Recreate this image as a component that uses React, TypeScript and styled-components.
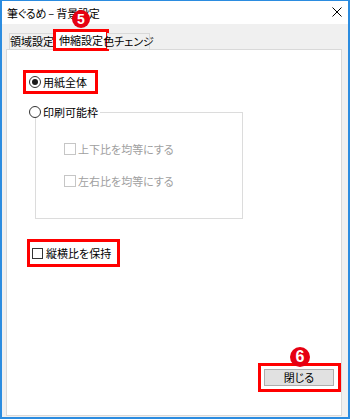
import React from 'react';
import styled, { createGlobalStyle } from 'styled-components';

const Global = createGlobalStyle`
  html, body { margin: 0; padding: 0; background: #ffffff; }
  #root { width: 350px; height: 419px; }
`;

const UI_FONT = `"Noto Sans CJK JP", "Noto Sans", sans-serif`;

const Window = styled.div`
  position: relative;
  width: 350px;
  height: 419px;
  box-sizing: border-box;
  border: 2px solid #2b8ce0;
  border-top-width: 1px;
  display: flex;
  flex-direction: column;
  background: #f0f0f0;
  font-family: ${UI_FONT};
  font-feature-settings: "palt";
  font-size: 11px;
  line-height: 1;
  color: #000;
`;

const TitleBar = styled.div`
  height: 23px;
  flex: none;
  background: #ffffff;
  display: flex;
  align-items: center;
  justify-content: space-between;
  padding: 2px 6px 0 5px;
  box-sizing: border-box;
`;

const TitleText = styled.span`
  font-size: 11px;
  letter-spacing: -0.2px;
  white-space: nowrap;
`;

const CloseIcon = styled.svg`
  width: 10px;
  height: 10px;
  margin-top: -3px;
`;

const Body = styled.div`
  flex: 1;
  display: flex;
  flex-direction: column;
  padding: 7px 6px 1px 4px;
  min-height: 0;
`;

const TabRow = styled.div`
  position: relative;
  z-index: 1;
  height: 19px;
  display: flex;
  align-items: flex-end;
  padding-left: 3px;
  margin-bottom: -1px;
  flex: none;
`;

const Tab = styled.div<{ $active?: boolean; $w: number }>`
  position: relative;
  box-sizing: border-box;
  width: ${(p) => p.$w}px;
  height: ${(p) => (p.$active ? 19 : 16)}px;
  margin-bottom: ${(p) => (p.$active ? 0 : 1)}px;
  border: 1px solid #d9d9d9;
  border-bottom: none;
  background: ${(p) => (p.$active ? '#ffffff' : '#f0f0f0')};
  display: flex;
  align-items: ${(p) => (p.$active ? 'flex-start' : 'center')};
  padding-top: ${(p) => (p.$active ? 3 : 0)}px;
  justify-content: center;
  font-size: 11px;
  white-space: nowrap;
  flex: none;
`;

const TabHighlight = styled.span`
  position: absolute;
  left: -3px;
  right: -3px;
  top: -3px;
  bottom: -1px;
  border: 3px solid #ff0000;
  pointer-events: none;
`;

const Badge = styled.span<{ $size: number; $left: number; $top: number }>`
  position: absolute;
  z-index: 5;
  left: ${(p) => p.$left}px;
  top: ${(p) => p.$top}px;
  width: ${(p) => p.$size}px;
  height: ${(p) => p.$size}px;
  border-radius: 50%;
  background: #e60012;
  color: #ffffff;
  font-family: "Liberation Sans", Arial, sans-serif;
  font-weight: bold;
  font-size: ${(p) => Math.round(p.$size * 0.78)}px;
  display: flex;
  align-items: center;
  justify-content: center;
  line-height: 1;
`;

const Panel = styled.div`
  flex: 1;
  background: #ffffff;
  border: 1px solid #d9d9d9;
  display: flex;
  flex-direction: column;
  align-items: flex-start;
  padding: 20px 0 23px 0;
  min-height: 0;
`;

const Highlight = styled.div<{ $ml: number; $mt: number; $pad: string; $h?: number }>`
  box-sizing: border-box;
  border: 3px solid #ff0000;
  margin-left: ${(p) => p.$ml}px;
  margin-top: ${(p) => p.$mt}px;
  padding: ${(p) => p.$pad};
  display: flex;
  align-items: center;
  ${(p) => (p.$h ? `height: ${p.$h}px;` : '')}
`;

const ButtonBox = styled(Highlight)`
  position: relative;
  align-self: flex-end;
  margin-top: auto;
`;

const Radio = styled.span<{ $checked?: boolean }>`
  box-sizing: border-box;
  width: 12px;
  height: 12px;
  border-radius: 50%;
  border: 1px solid #333333;
  background: #ffffff;
  display: inline-flex;
  align-items: center;
  justify-content: center;
  flex: none;
  &::after {
    content: '';
    width: 6px;
    height: 6px;
    border-radius: 50%;
    background: ${(p) => (p.$checked ? '#1a1a1a' : 'transparent')};
  }
`;

const Check = styled.span<{ $disabled?: boolean; $size: number }>`
  box-sizing: border-box;
  width: ${(p) => p.$size}px;
  height: ${(p) => p.$size}px;
  border: 1px solid ${(p) => (p.$disabled ? '#c6c6c6' : '#333333')};
  background: #ffffff;
  flex: none;
`;

const Label = styled.span<{ $disabled?: boolean; $gap: number }>`
  margin-left: ${(p) => p.$gap}px;
  color: ${(p) => (p.$disabled ? '#a0a0a0' : '#000000')};
  white-space: nowrap;
  font-size: 11px;
`;

const GroupBox = styled.div`
  margin-left: 22px;
  margin-top: 12px;
  width: 214px;
  display: flex;
  flex-direction: column;
`;

const GroupHeader = styled.div`
  position: relative;
  z-index: 1;
  height: 12px;
  display: flex;
  align-items: center;
`;

const GroupLine = styled.span`
  flex: 1;
  height: 1px;
  background: #dcdcdc;
  margin-left: 2px;
  align-self: center;
`;

const GroupBody = styled.div`
  margin-left: 6px;
  margin-top: -6px;
  border: 1px solid #dcdcdc;
  border-top: none;
  padding: 31px 0 31px 28px;
  display: flex;
  flex-direction: column;
  gap: 20px;
`;

const CheckRow = styled.div`
  height: 12px;
  display: flex;
  align-items: center;
`;

const CloseButton = styled.div`
  box-sizing: border-box;
  width: 70px;
  height: 17px;
  background: #e1e1e1;
  border: 1px solid #adadad;
  display: flex;
  align-items: center;
  justify-content: center;
  font-size: 11px;
`;

export default function App() {
  return (
    <>
      <Global />
      <Window>
        <TitleBar>
          <TitleText>筆ぐるめ – 背景設定</TitleText>
          <CloseIcon viewBox="0 0 10 10">
            <path d="M0.5 0.5 L9.5 9.5 M9.5 0.5 L0.5 9.5" stroke="#000" strokeWidth="1" fill="none" />
          </CloseIcon>
        </TitleBar>
        <Body>
          <TabRow>
            <Tab $w={46}>領域設定</Tab>
            <Tab $w={52} $active>
              伸縮設定
              <TabHighlight />
              <Badge $size={18} $left={16} $top={-22}>5</Badge>
            </Tab>
            <Tab $w={43}>色チェンジ</Tab>
          </TabRow>
          <Panel>
            <Highlight $ml={16} $mt={0} $pad="0 8px 0 3px" $h={24}>
              <Radio $checked />
              <Label $gap={2}>用紙全体</Label>
            </Highlight>
            <GroupBox>
              <GroupHeader>
                <Radio />
                <Label $gap={2}>印刷可能枠</Label>
                <GroupLine />
              </GroupHeader>
              <GroupBody>
                <CheckRow>
                  <Check $size={12} $disabled />
                  <Label $gap={2} $disabled>上下比を均等にする</Label>
                </CheckRow>
                <CheckRow>
                  <Check $size={12} $disabled />
                  <Label $gap={2} $disabled>左右比を均等にする</Label>
                </CheckRow>
              </GroupBody>
            </GroupBox>
            <Highlight $ml={20} $mt={20} $pad="0 6px 0 2px" $h={28}>
              <Check $size={11} />
              <Label $gap={3}>縦横比を保持</Label>
            </Highlight>
            <ButtonBox $ml={0} $mt={0} $pad="3px 4px 3px 3px">
              <Badge $size={20} $left={29} $top={-19}>6</Badge>
              <CloseButton>閉じる</CloseButton>
            </ButtonBox>
          </Panel>
        </Body>
      </Window>
    </>
  );
}
